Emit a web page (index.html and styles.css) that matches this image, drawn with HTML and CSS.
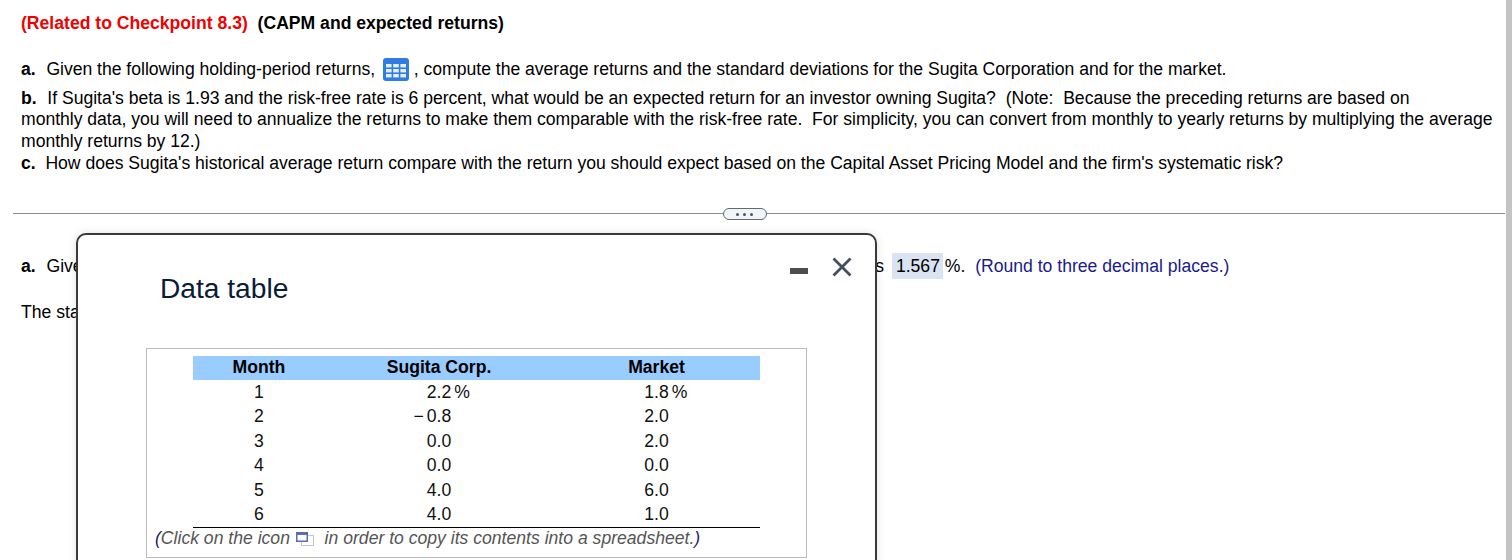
FILE: index.html
```html
<!DOCTYPE html>
<html lang="en">
<head>
<meta charset="utf-8">
<title>CAPM and expected returns</title>
<link rel="stylesheet" href="styles.css">
</head>
<body>
<div class="page">
  <main class="content">
    <section class="question">
      <p class="heading"><span class="related">(Related to Checkpoint 8.3)</span>&nbsp; (CAPM and expected returns)</p>
      <p class="part-a"><b>a.</b>&nbsp; Given the following holding-period returns,
        <svg class="grid-icon" width="26" height="23" viewBox="0 0 26 23" aria-hidden="true">
          <rect x="0" y="0" width="26" height="23" rx="3" fill="#2f7de0"/>
          <g fill="#ffffff" fill-opacity="0.88">
            <rect x="3" y="6" width="5.6" height="3.4"/><rect x="10.2" y="6" width="5.6" height="3.4"/><rect x="17.4" y="6" width="5.6" height="3.4"/>
            <rect x="3" y="11" width="5.6" height="3.4"/><rect x="10.2" y="11" width="5.6" height="3.4"/><rect x="17.4" y="11" width="5.6" height="3.4"/>
            <rect x="3" y="16" width="5.6" height="3.4"/><rect x="10.2" y="16" width="5.6" height="3.4"/><rect x="17.4" y="16" width="5.6" height="3.4"/>
          </g>
        </svg>
        , compute the average returns and the standard deviations for the Sugita Corporation and for the market.</p>
      <p class="part-b"><b>b.</b>&nbsp; If Sugita's beta is 1.93 and the risk-free rate is 6 percent, what would be an expected return for an investor owning Sugita?&nbsp; (Note:&nbsp; Because the preceding returns are based on</p>
      <p class="part-rest">monthly data, you will need to annualize the returns to make them comparable with the risk-free rate.&nbsp; For simplicity, you can convert from monthly to yearly returns by multiplying the average<br>monthly returns by 12.)<br><b>c.</b>&nbsp; How does Sugita's historical average return compare with the return you should expect based on the Capital Asset Pricing Model and the firm's systematic risk?</p>
    </section>
    <div class="divider">
      <button class="more" type="button" aria-label="More"><i></i><i></i><i></i></button>
    </div>
    <section class="answers">
      <p class="answer"><b>a.</b>&nbsp; Given the following holding-period returns,&nbsp; the historical monthly return for the Sugita Corporation's stock is <span class="filled">1.567</span> %.&nbsp; <span class="hint">(Round to three decimal places.)</span></p>
      <p class="answer-next">The standard deviation for the Sugita Corporation is</p>
    </section>
  </main>
  <div class="scrollbar"></div>

  <div class="modal" role="dialog" aria-label="Data table">
    <div class="modal-head">
      <h2 class="modal-title">Data table</h2>
      <div class="modal-controls">
        <span class="minimize"></span>
        <svg class="close" width="20" height="20" viewBox="0 0 20 20" aria-hidden="true">
          <path d="M1.5 1.5 L18.5 18.5 M18.5 1.5 L1.5 18.5" stroke="#44505e" stroke-width="2.8" fill="none"/>
        </svg>
      </div>
    </div>
    <div class="data-box">
      <table class="data">
        <colgroup><col class="c1"><col class="c2"><col class="c3"></colgroup>
        <thead>
          <tr><th>Month</th><th>Sugita Corp.</th><th>Market</th></tr>
        </thead>
        <tbody>
          <tr><td>1</td><td><span class="val"><i></i><span>2.2</span><i>%</i></span></td><td><span class="val"><i></i><span>1.8</span><i>%</i></span></td></tr>
          <tr><td>2</td><td><span class="val"><i>−</i><span>0.8</span><i></i></span></td><td>2.0</td></tr>
          <tr><td>3</td><td>0.0</td><td>2.0</td></tr>
          <tr><td>4</td><td>0.0</td><td>0.0</td></tr>
          <tr><td>5</td><td>4.0</td><td>6.0</td></tr>
          <tr class="last"><td>6</td><td>4.0</td><td>1.0</td></tr>
        </tbody>
      </table>
      <p class="note"><span class="paren">(</span>Click on the icon
        <svg class="copy-icon" width="18" height="14" viewBox="0 0 18 14" aria-hidden="true">
          <rect x="5.5" y="3.5" width="12" height="10" fill="#ffffff" stroke="#bcc4e2"/>
          <rect x="0.75" y="0.75" width="10.5" height="8.5" fill="#ffffff" stroke="#5a6bb0" stroke-width="1.5"/>
          <rect x="0.75" y="0.75" width="10.5" height="2.2" fill="#5a6bb0"/>
        </svg>
        &nbsp;in order to copy its contents into a spreadsheet.<span class="paren">)</span></p>
    </div>
  </div>
</div>
</body>
</html>
```
FILE: styles.css
```css
* { box-sizing: border-box; }
html, body { margin: 0; height: 560px; overflow: hidden; background: #fff; }
body { font-family: "Liberation Sans", Arial, sans-serif; font-size: 17.6px; color: #000; }
p { margin: 0; }
p > b:first-child { margin-right: 1px; }

.page { position: relative; display: flex; height: 560px; overflow: hidden; }
.content { flex: 1; min-width: 0; padding-right: 1px; }
.scrollbar { width: 6px; background: #c4c4c4; }

.question { padding: 14px 0 0 21px; }
.heading { font-weight: 700; line-height: 18px; }
.related { color: #f00000; }
.part-a { margin-top: 23px; line-height: 28px; height: 28px; white-space: nowrap; letter-spacing: -0.02px; }
.grid-icon { vertical-align: -6px; margin-left: 3px; }
.part-b { margin-top: 5px; line-height: 20px; white-space: nowrap; letter-spacing: -0.02px; }
.part-rest { margin-top: -0.5px; line-height: 22px; white-space: nowrap; letter-spacing: -0.02px; }

.divider { position: relative; margin: 39.9px 0 0 13px; height: 1px; background: #8a9099; display: flex; justify-content: center; }
.more { width: 44px; height: 12px; margin: -5px 0 0 -29px; padding: 0; border: 1px solid #5f6b7a; border-radius: 6px; background: #f2f4f7; display: flex; align-items: center; justify-content: center; gap: 4px; }
.more i { width: 3px; height: 3px; border-radius: 50%; background: #4a5563; }

.answers { padding: 0 0 0 21px; }
.answer { margin-top: 39px; line-height: 26px; white-space: nowrap; }
.filled { display: inline-block; background: #d9e3f2; padding: 0 3px 0 4px; margin: 0 -3px 0 3px; }
.hint { color: #1a1a8c; }
.answer-next { margin-top: 22px; line-height: 22px; white-space: nowrap; }

.modal { position: absolute; left: 76px; top: 233px; width: 801px; height: 345px; padding: 0 0 0 68px; background: #fff; border: 2px solid #3a3a3a; border-radius: 10px; box-shadow: 0 0 8px rgba(0,0,0,.12); }
.modal-head { display: flex; justify-content: space-between; align-items: flex-start; height: 113px; padding: 0 23px 0 14px; }
.modal-title { margin: 37px 0 0; font-size: 28.16px; font-weight: 400; line-height: 33px; color: #0b1a3a; }
.modal-controls { display: flex; align-items: flex-start; gap: 24px; padding-top: 22px; }
.minimize { width: 18px; height: 6px; margin-top: 11px; background: #4d4d4d; }

.data-box { width: 661px; height: 210px; border: 1px solid #bbb; padding: 7px 0 0 46px; }
.data { width: 567px; border-collapse: collapse; table-layout: fixed; line-height: 18px; }
.c1 { width: 132px; } .c2 { width: 228px; } .c3 { width: 207px; }
.data th { background: #99ccff; height: 24px; padding: 0 0 2px; font-weight: 700; text-align: center; }
.data td { height: 24.5px; padding: 0 0 1px; text-align: center; color: #111; }
.data tbody tr:nth-child(odd) td { padding-bottom: 0; }
.data .last td { border-bottom: 1px solid #000; }
.val { display: grid; grid-template-columns: 1fr auto 1fr; column-gap: 3px; }
.val i { font-style: normal; }
.val i:first-child { text-align: right; }
.val i:last-child { text-align: left; }
.note { margin: 0 0 0 -38px; font-style: italic; line-height: 20px; color: #555; white-space: nowrap; }
.paren { color: #1a1a6c; }
.copy-icon { vertical-align: -2px; margin: 0 1px 0 1px; }
```
